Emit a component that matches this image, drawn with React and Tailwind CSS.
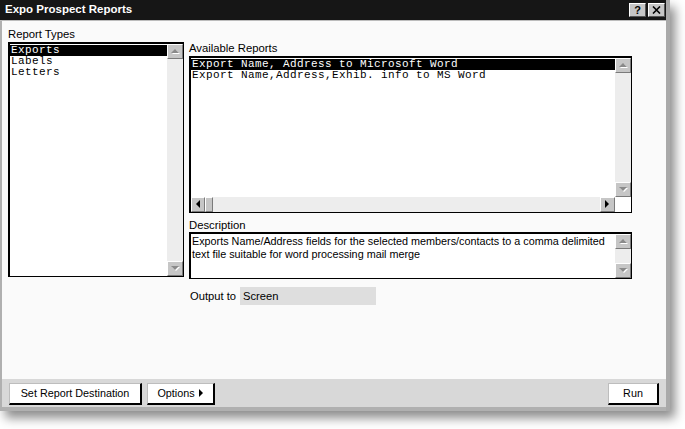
import React from "react";

const sans = { fontFamily: '"Liberation Sans", Arial, sans-serif' };
const mono = { fontFamily: '"Liberation Mono", "Courier New", monospace' };

function Arrow({ dir = "up", on = false }) {
  const pts = {
    up: "0,6 4,2 8,6",
    down: "0,2 4,6 8,2",
    left: "6,0 2,4 6,8",
    right: "2,0 6,4 2,8",
  }[dir];
  return (
    <svg width="9" height="9" viewBox="0 0 9 9">
      {!on && <polygon points={pts} fill="#ffffff" transform="translate(1,1)" />}
      <polygon points={pts} fill={on ? "#000000" : "#8a8a8a"} />
    </svg>
  );
}

function ArrowBtn({ dir, on, className = "" }) {
  return (
    <div
      className={
        "flex items-center justify-center bg-[#c6c6c6] border border-t-white border-l-white border-r-[#7a7a7a] border-b-[#7a7a7a] " +
        className
      }
    >
      <Arrow dir={dir} on={on} />
    </div>
  );
}

const track = "bg-[#ededed]";

function VScroll() {
  return (
    <div className="flex w-[16px] shrink-0 flex-col">
      <ArrowBtn dir="up" className="h-[15px]" />
      <div className={"flex-1 " + track} />
      <ArrowBtn dir="down" className="h-[15px]" />
    </div>
  );
}

function Row({ text, sel }) {
  return (
    <div
      className={
        "h-[11px] overflow-hidden whitespace-pre pl-[1px] text-[11px] leading-[11px] tracking-[0.4px] " +
        (sel ? "bg-black text-white" : "text-black")
      }
      style={mono}
    >
      {text}
    </div>
  );
}

const boxBorder = "border-t-2 border-l-2 border-r border-b border-black bg-white";

function ReportTypes() {
  return (
    <div className="flex w-[176px] flex-col">
      <div className="mt-[7px] h-[13px] text-[11.3px] leading-[13px]">Report Types</div>
      <div className={"mt-[1px] flex h-[235px] " + boxBorder}>
        <div className="flex-1 pt-[1px]">
          <Row text="Exports" sel />
          <Row text="Labels" />
          <Row text="Letters" />
        </div>
        <VScroll />
      </div>
    </div>
  );
}

function AvailableReports() {
  return (
    <div className={"mt-[1px] flex h-[157px] flex-col " + boxBorder}>
      <div className="flex flex-1">
        <div className="flex-1 pt-[1px]">
          <Row text="Export Name, Address to Microsoft Word" sel />
          <Row text="Export Name,Address,Exhib. info to MS Word" />
        </div>
        <VScroll />
      </div>
      <div className="flex h-[15px]">
        <ArrowBtn dir="left" on className="w-[14px]" />
        <div className="w-[8px] bg-[#c6c6c6] border border-t-white border-l-white border-r-[#7a7a7a] border-b-[#7a7a7a]" />
        <div className={"flex-1 " + track} />
        <ArrowBtn dir="right" on className="w-[15px]" />
        <div className="w-[16px] bg-white" />
      </div>
    </div>
  );
}

function Btn({ children, className = "" }) {
  return (
    <button
      className={
        "flex h-[22px] items-center justify-center bg-white text-[10.8px] text-black border-t border-l border-[#bdbdbd] border-r-2 border-b-2 border-r-black border-b-black " +
        className
      }
    >
      {children}
    </button>
  );
}

export default function App() {
  return (
    <div className="h-[429px] w-[685px] bg-white" style={sans}>
      <div className="flex h-[411px] w-[670px] flex-col border-r-4 border-[#a9a9a9] shadow-[5px_7px_10px_rgba(0,0,0,0.45)]">
        {/* title bar */}
        <div className="flex h-[20px] items-center justify-between bg-[#161616] pl-[5px] pr-[1px]">
          <span className="text-[11.5px] font-bold text-white">Expo Prospect Reports</span>
          <div className="flex gap-[2px]">
            <div className="flex h-[14px] w-[17px] items-center justify-center bg-[#c6c6c6] border border-t-white border-l-white border-r-[#555] border-b-[#555] text-[11px] font-bold leading-none text-black">
              ?
            </div>
            <div className="flex h-[14px] w-[17px] items-center justify-center bg-[#c6c6c6] border border-t-white border-l-white border-r-[#555] border-b-[#555]">
              <svg width="9" height="8" viewBox="0 0 9 8">
                <path d="M1 0.5 L8 7.5 M8 0.5 L1 7.5" stroke="#000" strokeWidth="1.6" />
              </svg>
            </div>
          </div>
        </div>
        <div className="h-[1px] bg-[#bcbcbc]" />

        {/* body */}
        <div className="flex flex-1 flex-col border-l-2 border-b-4 border-[#b0b0b0] text-black">
          <div className="flex h-[358px] gap-[5px] bg-[#fafafa] pl-[6px]">
            <ReportTypes />
            <div className="flex w-[443px] flex-col">
              <div className="mt-[21px] h-[13px] text-[11.3px] leading-[13px]">Available Reports</div>
              <AvailableReports />
              <div className="mt-[6px] h-[13px] text-[11.3px] leading-[13px]">Description</div>
              <div className={"flex h-[47px] " + boxBorder}>
                <div className="flex-1 pl-[1px] pt-[1px] text-[10.8px] leading-[13px]">
                  Exports Name/Address fields for the selected members/contacts to a comma delimited
                  <br />
                  text file suitable for word processing mail merge
                </div>
                <VScroll />
              </div>
              <div className="mt-[8px] flex h-[18px] items-center">
                <span className="w-[51px] pl-[1px] text-[11.2px]">Output to</span>
                <div className="flex h-[18px] w-[136px] items-center bg-[#dedede] pl-[3px] text-[11.2px]">
                  Screen
                </div>
              </div>
            </div>
          </div>

          {/* button bar */}
          <div className="flex flex-1 items-center justify-between bg-[#d8d8d8] pl-[7px] pr-[7px] pt-[1px]">
            <div className="flex gap-[5px]">
              <Btn className="w-[133px]">Set Report Destination</Btn>
              <Btn className="w-[68px] gap-[4px]">
                Options
                <svg width="5" height="8" viewBox="0 0 5 8">
                  <polygon points="0,0 4,4 0,8" fill="#000" />
                </svg>
              </Btn>
            </div>
            <Btn className="w-[51px]">Run</Btn>
          </div>
        </div>
      </div>
    </div>
  );
}
